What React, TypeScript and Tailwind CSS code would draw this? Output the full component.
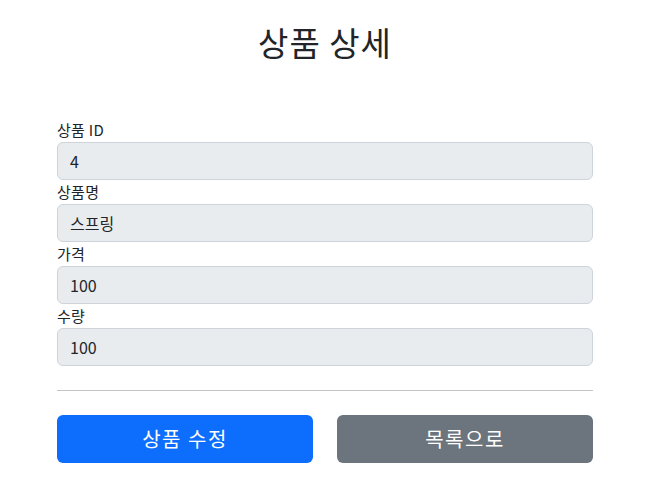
export default function App() {
  const fields = [
    { label: "상품 ID", value: "4" },
    { label: "상품명", value: "스프링" },
    { label: "가격", value: "100" },
    { label: "수량", value: "100" },
  ];

  return (
    <div
      className="min-h-screen bg-white text-[#212529]"
      style={{ fontFamily: '"Noto Sans CJK KR", "Noto Sans", sans-serif' }}
    >
      <div className="ml-[57px] w-[536px]">
        <div className="flex h-[118px] justify-center pt-[20px]">
          <h2 className="text-[33px] leading-[44px] font-normal tracking-[1px]">상품 상세</h2>
        </div>

        {fields.map((f) => (
          <div key={f.label}>
            <div className="h-[24px] text-[15px] leading-[24px] tracking-[0.3px]">{f.label}</div>
            <input
              readOnly
              value={f.value}
              className="block h-[38px] w-full rounded-[6px] border border-[#ced4da] bg-[#e9ecef] px-[12px] text-[16px] text-[#212529] outline-none"
            />
          </div>
        ))}

        <hr className="my-[24px] border-0 border-t border-[#c4c4c4]" />

        <div className="flex gap-[24px]">
          <button className="h-[48px] flex-1 rounded-[6px] bg-[#0d6efd] text-[20px] tracking-[1.5px] text-white">
            상품 수정
          </button>
          <button className="h-[48px] flex-1 rounded-[6px] bg-[#6c757d] text-[20px] tracking-[1.5px] text-white">
            목록으로
          </button>
        </div>
      </div>
    </div>
  );
}
